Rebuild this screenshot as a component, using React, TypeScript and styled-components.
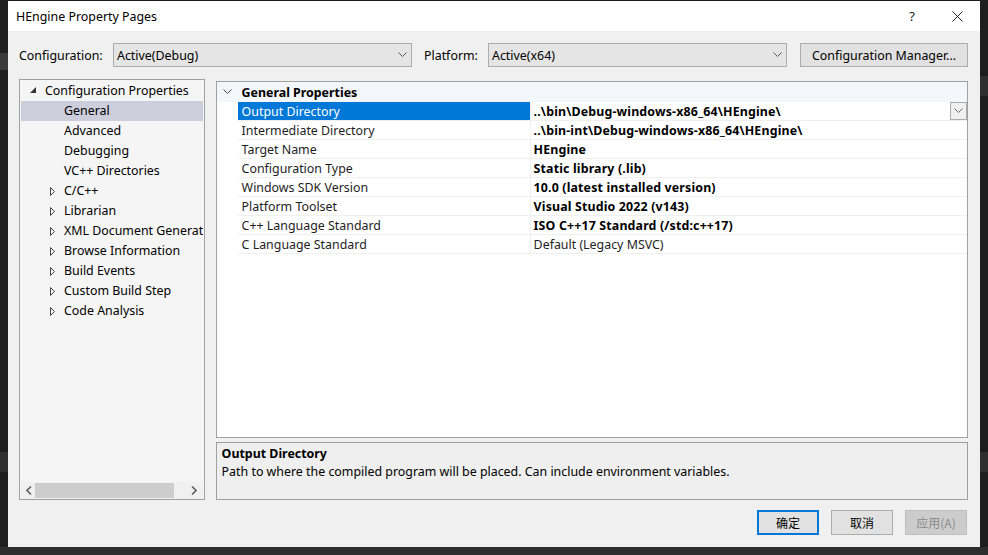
import { FunctionComponent } from "react";
import styled, { createGlobalStyle, css } from "styled-components";

const GlobalStyle = createGlobalStyle`
  html, body {
    margin: 0;
    padding: 0;
  }
  body {
    width: 988px;
    height: 555px;
    overflow: hidden;
    background:
      linear-gradient(#3a3a3a, #3a3a3a) 0 53px / 8px 17px no-repeat,
      linear-gradient(#2f2f2f, #2f2f2f) 980px 76px / 8px 20px no-repeat,
      linear-gradient(#2f2f2f, #2f2f2f) 0 452px / 8px 20px no-repeat,
      linear-gradient(#2f2f2f, #2f2f2f) 980px 452px / 8px 20px no-repeat,
      linear-gradient(#2d2d2d, #2d2d2d) 0 547px / 988px 8px no-repeat,
      #1e1e1e;
    font-family: "Noto Sans", "Liberation Sans", "Noto Sans CJK SC", sans-serif;
    font-size: 12.4px;
    color: #000;
  }
  * { box-sizing: border-box; }
`;

const Screen = styled.div`
  padding: 1px 8px 0 8px;
`;

const Dialog = styled.div`
  width: 972px;
  height: 546px;
  background: #f0f0f0;
  display: flex;
  flex-direction: column;
`;

const TitleBar = styled.div`
  height: 30px;
  background: #fff;
  display: flex;
  align-items: center;
  padding-left: 8px;
  padding-right: 17px;
`;

const TitleText = styled.div`
  flex: 1;
`;

const TitleButtons = styled.div`
  display: flex;
  align-items: center;
  gap: 37px;
  span {
    font-size: 13px;
    color: #222;
  }
`;

const Body = styled.div`
  flex: 1;
  display: flex;
  flex-direction: column;
  padding: 12px 12px 0 11px;
`;

const ConfigRow = styled.div`
  display: flex;
  align-items: center;
  height: 24px;
`;

const FieldLabel = styled.label<{ $w: number; $gap?: number }>`
  width: ${(p) => p.$w}px;
  padding-left: ${(p) => p.$gap ?? 0}px;
  flex-shrink: 0;
`;

const Combo = styled.div<{ $w: number }>`
  width: ${(p) => p.$w}px;
  height: 24px;
  border: 1px solid #acacac;
  background: #e5e5e5;
  display: flex;
  align-items: center;
  padding: 0 0 0 3px;
  justify-content: space-between;
  svg {
    margin-right: 4px;
  }
`;

const PushButton = styled.button`
  margin-left: auto;
  width: 168px;
  height: 24px;
  border: 1px solid #adadad;
  background: #e1e1e1;
  font: inherit;
  color: #000;
  padding: 0;
`;

const Main = styled.div`
  display: flex;
  gap: 11px;
  margin-top: 12px;
`;

const TreePanel = styled.div`
  width: 186px;
  height: 421px;
  border: 1px solid #a0a0a0;
  background: #f5f5f5;
  display: flex;
  flex-direction: column;
  padding: 0 0 0 1px;
`;

const TreeList = styled.div`
  flex: 1;
  overflow: hidden;
  padding-top: 1px;
`;

const TreeRow = styled.div<{ $level: number; $selected?: boolean }>`
  position: relative;
  height: 20px;
  width: 182px;
  display: flex;
  align-items: center;
  white-space: nowrap;
  overflow: hidden;
  padding-left: ${(p) => (p.$level === 0 ? 24 : 43)}px;
  padding-bottom: 1px;
  background: ${(p) => (p.$selected ? "#cccedb" : "transparent")};
`;

const Expander = styled.span<{ $level: number }>`
  position: absolute;
  left: ${(p) => (p.$level === 0 ? 9 : 29)}px;
  top: 6px;
  display: flex;
`;

const HScroll = styled.div`
  height: 17px;
  margin-right: 1px;
  background: #f0f0f0;
  display: flex;
  align-items: center;
  padding: 0 6px 0 5px;
  gap: 3px;
`;

const ScrollThumb = styled.div`
  width: 139px;
  height: 15px;
  background: #cdcdcd;
  margin-right: auto;
`;

const RightColumn = styled.div`
  width: 754px;
  display: flex;
  flex-direction: column;
  gap: 4px;
  padding-top: 2px;
`;

const GridPanel = styled.div`
  height: 357px;
  border: 1px solid #a0a0a0;
  background: #fff;
`;

const GroupHeader = styled.div`
  height: 20px;
  background: #f3f6fa;
  display: flex;
  align-items: center;
  font-weight: 700;
  padding-left: 6px;
  gap: 10px;
`;

const PropRow = styled.div`
  display: grid;
  grid-template-columns: 21px 292px 1fr;
  height: 19px;
`;

const cellBase = css`
  border-bottom: 1px solid #f0f0f0;
  display: flex;
  align-items: center;
  white-space: nowrap;
  overflow: hidden;
`;

const NameCell = styled.div<{ $selected?: boolean }>`
  ${cellBase};
  padding-left: 4px;
  background: ${(p) => (p.$selected ? "#0078d7" : "#fff")};
  color: ${(p) => (p.$selected ? "#fff" : "#1e1e1e")};
`;

const ValueCell = styled.div<{ $bold?: boolean }>`
  ${cellBase};
  border-left: 1px solid #f0f0f0;
  padding-left: 3px;
  font-weight: ${(p) => (p.$bold ? 700 : 400)};
  letter-spacing: ${(p) => (p.$bold ? "0.15px" : "0")};
  color: ${(p) => (p.$bold ? "#000" : "#1e1e1e")};
  justify-content: space-between;
`;

const ValueDrop = styled.div`
  width: 17px;
  height: 18px;
  border: 1px solid #acacac;
  background: #f0f0f0;
  display: flex;
  align-items: center;
  justify-content: center;
`;

const DescPanel = styled.div`
  height: 58px;
  border: 1px solid #a0a0a0;
  background: #efefef;
  padding: 2px 5px;
  line-height: 18px;
  strong {
    display: block;
  }
`;

const Footer = styled.div`
  display: flex;
  justify-content: flex-end;
  gap: 12px;
  margin-top: 10px;
  padding-right: 1px;
`;

const DialogButton = styled.button<{ $variant?: "default" | "disabled" }>`
  width: 62px;
  height: 25px;
  padding: 0;
  font-family: "Noto Sans CJK SC", "Noto Sans", sans-serif;
  font-size: 12px;
  background: ${(p) => (p.$variant === "disabled" ? "#cccccc" : "#e1e1e1")};
  color: ${(p) => (p.$variant === "disabled" ? "#8a8a8a" : "#000")};
  border: ${(p) =>
    p.$variant === "default"
      ? "2px solid #0078d7"
      : p.$variant === "disabled"
      ? "1px solid #bfbfbf"
      : "1px solid #adadad"};
`;

const Chevron = ({ color = "#555" }: { color?: string }) => (
  <svg width="9" height="6" viewBox="0 0 9 6">
    <polyline points="0.5,0.5 4.5,4.5 8.5,0.5" fill="none" stroke={color} strokeWidth="1" />
  </svg>
);

const OpenArrow = () => (
  <svg width="7" height="7" viewBox="0 0 7 7">
    <polygon points="6,0 6,6 0,6" fill="#333" />
  </svg>
);

const ClosedArrow = () => (
  <svg width="5" height="9" viewBox="0 0 5 9">
    <polygon points="0.5,0.5 4.5,4.5 0.5,8.5" fill="none" stroke="#444" strokeWidth="1" />
  </svg>
);

const CloseIcon = () => (
  <svg width="11" height="11" viewBox="0 0 11 11">
    <path d="M0.5 0.5 L10.5 10.5 M10.5 0.5 L0.5 10.5" stroke="#222" strokeWidth="1" />
  </svg>
);

const ScrollArrow = ({ dir }: { dir: "left" | "right" }) => (
  <svg width="6" height="9" viewBox="0 0 6 9">
    <polyline
      points={dir === "left" ? "5,0.5 1,4.5 5,8.5" : "1,0.5 5,4.5 1,8.5"}
      fill="none"
      stroke="#606060"
      strokeWidth="1.6"
    />
  </svg>
);

type TreeItem = { label: string; level: number; expander?: "open" | "closed"; selected?: boolean };

const treeItems: TreeItem[] = [
  { label: "Configuration Properties", level: 0, expander: "open" },
  { label: "General", level: 1, selected: true },
  { label: "Advanced", level: 1 },
  { label: "Debugging", level: 1 },
  { label: "VC++ Directories", level: 1 },
  { label: "C/C++", level: 1, expander: "closed" },
  { label: "Librarian", level: 1, expander: "closed" },
  { label: "XML Document Generat", level: 1, expander: "closed" },
  { label: "Browse Information", level: 1, expander: "closed" },
  { label: "Build Events", level: 1, expander: "closed" },
  { label: "Custom Build Step", level: 1, expander: "closed" },
  { label: "Code Analysis", level: 1, expander: "closed" },
];

type Prop = { name: string; value: string; bold: boolean };

const props: Prop[] = [
  { name: "Output Directory", value: "..\\bin\\Debug-windows-x86_64\\HEngine\\", bold: true },
  { name: "Intermediate Directory", value: "..\\bin-int\\Debug-windows-x86_64\\HEngine\\", bold: true },
  { name: "Target Name", value: "HEngine", bold: true },
  { name: "Configuration Type", value: "Static library (.lib)", bold: true },
  { name: "Windows SDK Version", value: "10.0 (latest installed version)", bold: true },
  { name: "Platform Toolset", value: "Visual Studio 2022 (v143)", bold: true },
  { name: "C++ Language Standard", value: "ISO C++17 Standard (/std:c++17)", bold: true },
  { name: "C Language Standard", value: "Default (Legacy MSVC)", bold: false },
];

const App: FunctionComponent = () => {
  return (
    <Screen>
      <GlobalStyle />
      <Dialog>
        <TitleBar>
          <TitleText>HEngine Property Pages</TitleText>
          <TitleButtons>
            <span>?</span>
            <CloseIcon />
          </TitleButtons>
        </TitleBar>
        <Body>
          <ConfigRow>
            <FieldLabel $w={94}>Configuration:</FieldLabel>
            <Combo $w={299}>
              Active(Debug)
              <Chevron />
            </Combo>
            <FieldLabel $w={76} $gap={12}>
              Platform:
            </FieldLabel>
            <Combo $w={299}>
              Active(x64)
              <Chevron />
            </Combo>
            <PushButton>Configuration Manager...</PushButton>
          </ConfigRow>

          <Main>
            <TreePanel>
              <TreeList>
                {treeItems.map((item) => (
                  <TreeRow key={item.label} $level={item.level} $selected={item.selected}>
                    {item.expander && (
                      <Expander $level={item.level}>
                        {item.expander === "open" ? <OpenArrow /> : <ClosedArrow />}
                      </Expander>
                    )}
                    {item.label}
                  </TreeRow>
                ))}
              </TreeList>
              <HScroll>
                <ScrollArrow dir="left" />
                <ScrollThumb />
                <ScrollArrow dir="right" />
              </HScroll>
            </TreePanel>

            <RightColumn>
              <GridPanel>
                <GroupHeader>
                  <Chevron color="#444" />
                  General Properties
                </GroupHeader>
                {props.map((p, i) => (
                  <PropRow key={p.name}>
                    <div />
                    <NameCell $selected={i === 0}>{p.name}</NameCell>
                    <ValueCell $bold={p.bold}>
                      {p.value}
                      {i === 0 && (
                        <ValueDrop>
                          <Chevron color="#666" />
                        </ValueDrop>
                      )}
                    </ValueCell>
                  </PropRow>
                ))}
              </GridPanel>
              <DescPanel>
                <strong>Output Directory</strong>
                Path to where the compiled program will be placed. Can include environment variables.
              </DescPanel>
            </RightColumn>
          </Main>

          <Footer>
            <DialogButton $variant="default">确定</DialogButton>
            <DialogButton>取消</DialogButton>
            <DialogButton $variant="disabled">应用(A)</DialogButton>
          </Footer>
        </Body>
      </Dialog>
    </Screen>
  );
};

export default App;
